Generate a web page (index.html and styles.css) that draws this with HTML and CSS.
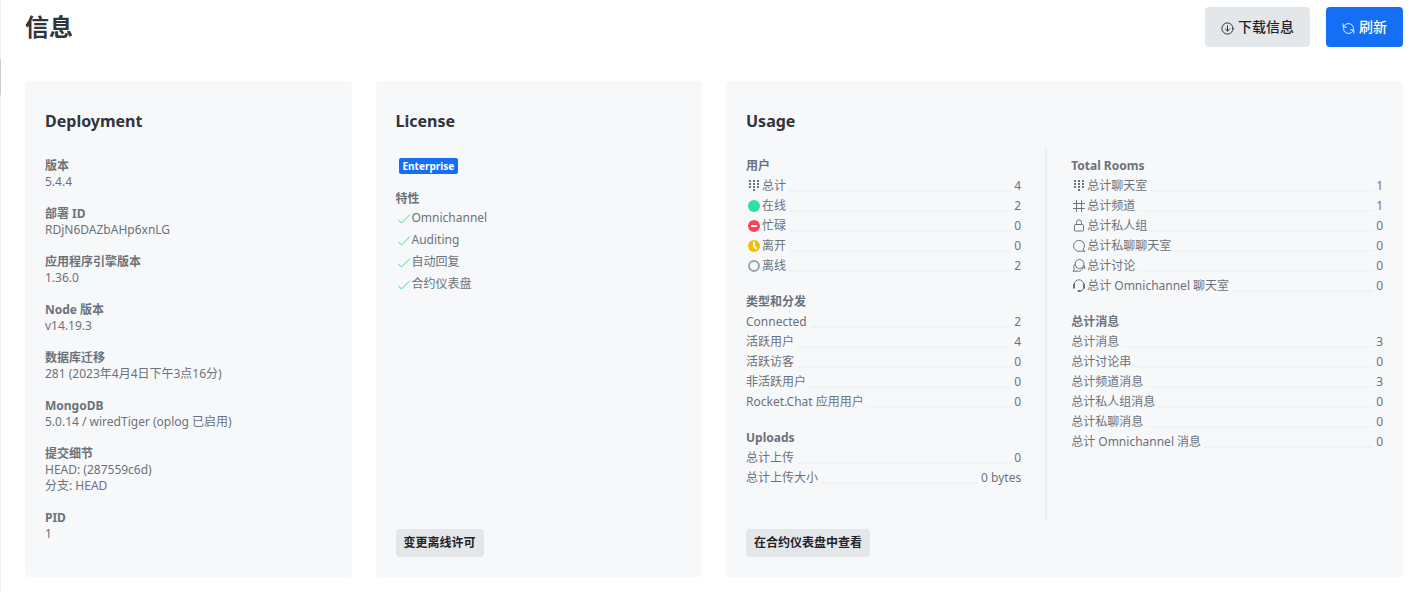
FILE: index.html
```html
<!DOCTYPE html>
<html lang="zh-CN">
<head>
    <meta charset="UTF-8">
    <meta name="viewport" content="width=device-width, initial-scale=1.0">
    <title>信息</title>
    <link rel="stylesheet" href="styles.css">
</head>
<body>
    <!-- Icon set -->
    <svg class="icon-defs" aria-hidden="true">
        <symbol id="i-download" viewBox="0 0 14 14">
            <circle cx="7" cy="7" r="6"/>
            <path d="M7 4v5.600M4.600 7.400L7 9.800l2.400-2.400"/>
        </symbol>
        <symbol id="i-refresh" viewBox="0 0 14 14">
            <path d="M1.200 2v3.600h3.600M1.600 5.300C2.600 3 4.600 1.700 7 1.700c2.900 0 5.200 2.100 5.400 5M12.800 12V8.400H9.200M12.400 8.700c-1 2.300-3 3.600-5.400 3.600-2.900 0-5.200-2.100-5.400-5"/>
        </symbol>
        <symbol id="i-check" viewBox="0 0 16 16">
            <path d="M2.500 10l3 3 8-8"/>
        </symbol>
        <symbol id="i-dialpad" viewBox="0 0 16 16">
            <path d="M3 2h2v2H3zM7 2h2v2H7zM11 2h2v2h-2zM3 5h2v2H3zM7 5h2v2H7zM11 5h2v2h-2zM3 8h2v2H3zM7 8h2v2H7zM11 8h2v2h-2zM7 11h2v2H7z"/>
        </symbol>
        <symbol id="i-hash" viewBox="0 0 16 16">
            <path d="M5.500 2.500v11M10.500 2.500v11M2.500 5.500h11M2.500 10.500h11"/>
        </symbol>
        <symbol id="i-lock" viewBox="0 0 16 16">
            <rect x="3.500" y="6.500" width="9" height="6.500" rx="1"/>
            <path d="M5.500 6.500V4.300a2.500 2.500 0 0 1 5 0V6.500"/>
        </symbol>
        <symbol id="i-balloon" viewBox="0 0 16 16">
            <path d="M12.200 11.500a5.500 5.500 0 1 0-2.700 1.700h4z"/>
        </symbol>
        <symbol id="i-discussion" viewBox="0 0 16 16">
            <path d="M5.400 9.200a4.500 4.500 0 1 1 3.200 1.300c-1.300 0-2.400-.5-3.200-1.300zM12 9.500l2 .8-.8-2.600M4 6C2.500 7.700 2.400 9.400 3.300 11L2 13.200h5.500c2 0 3.300-1 4-2.700"/>
        </symbol>
        <symbol id="i-headset" viewBox="0 0 16 16">
            <path d="M3.300 7V6.500a4.700 4.700 0 0 1 9.400 0V9.500c0 2-1 3.200-3.700 3.500"/>
            <path class="thick" d="M3 6.500v3.200M13 6.500v3.200M7.500 13h1.500"/>
        </symbol>
        <symbol id="i-away" viewBox="0 0 16 16">
            <circle class="away" cx="8" cy="8" r="6"/>
            <path class="hands" d="M8 4.500V8l2 2.500"/>
        </symbol>
    </svg>

    <main class="page">
        <header class="page-header">
            <h1>信息</h1>
            <div class="actions">
                <button type="button" class="btn"><svg class="icon-btn"><use href="#i-download"/></svg>下载信息</button>
                <button type="button" class="btn btn-primary"><svg class="icon-btn"><use href="#i-refresh"/></svg>刷新</button>
            </div>
        </header>

        <div class="cards">
            <section class="card">
                <h2>Deployment</h2>
                <dl class="card-body details">
                    <div><dt>版本</dt><dd>5.4.4</dd></div>
                    <div><dt>部署 ID</dt><dd>RDjN6DAZbAHp6xnLG</dd></div>
                    <div><dt>应用程序引擎版本</dt><dd>1.36.0</dd></div>
                    <div><dt>Node 版本</dt><dd>v14.19.3</dd></div>
                    <div><dt>数据库迁移</dt><dd>281 (2023年4月4日下午3点16分)</dd></div>
                    <div><dt>MongoDB</dt><dd>5.0.14 / wiredTiger (oplog 已启用)</dd></div>
                    <div><dt>提交细节</dt><dd>HEAD: (287559c6d)</dd><dd>分支: HEAD</dd></div>
                    <div><dt>PID</dt><dd>1</dd></div>
                </dl>
            </section>

            <section class="card">
                <h2>License</h2>
                <div class="card-body">
                    <span class="badge">Enterprise</span>
                    <h3>特性</h3>
                    <ul class="features">
                        <li><svg class="icon check"><use href="#i-check"/></svg>Omnichannel</li>
                        <li><svg class="icon check"><use href="#i-check"/></svg>Auditing</li>
                        <li><svg class="icon check"><use href="#i-check"/></svg>自动回复</li>
                        <li><svg class="icon check"><use href="#i-check"/></svg>合约仪表盘</li>
                    </ul>
                </div>
                <div class="card-footer">
                    <button type="button" class="btn btn-small">变更离线许可</button>
                </div>
            </section>

            <section class="card card-wide">
                <h2>Usage</h2>
                <div class="usage">
                    <div class="usage-col">
                        <div class="group">
                            <h3>用户</h3>
                            <dl>
                                <div class="row"><dt><svg class="icon solid"><use href="#i-dialpad"/></svg>总计</dt><dd>4</dd></div>
                                <div class="row"><dt><span class="status online"></span>在线</dt><dd>2</dd></div>
                                <div class="row"><dt><span class="status busy"></span>忙碌</dt><dd>0</dd></div>
                                <div class="row"><dt><svg class="icon"><use href="#i-away"/></svg>离开</dt><dd>0</dd></div>
                                <div class="row"><dt><span class="status offline"></span>离线</dt><dd>2</dd></div>
                            </dl>
                        </div>
                        <div class="group">
                            <h3>类型和分发</h3>
                            <dl>
                                <div class="row"><dt>Connected</dt><dd>2</dd></div>
                                <div class="row"><dt>活跃用户</dt><dd>4</dd></div>
                                <div class="row"><dt>活跃访客</dt><dd>0</dd></div>
                                <div class="row"><dt>非活跃用户</dt><dd>0</dd></div>
                                <div class="row"><dt>Rocket.Chat 应用用户</dt><dd>0</dd></div>
                            </dl>
                        </div>
                        <div class="group">
                            <h3>Uploads</h3>
                            <dl>
                                <div class="row"><dt>总计上传</dt><dd>0</dd></div>
                                <div class="row"><dt>总计上传大小</dt><dd>0 bytes</dd></div>
                            </dl>
                        </div>
                    </div>
                    <div class="divider"></div>
                    <div class="usage-col">
                        <div class="group">
                            <h3>Total Rooms</h3>
                            <dl>
                                <div class="row"><dt><svg class="icon solid"><use href="#i-dialpad"/></svg>总计聊天室</dt><dd>1</dd></div>
                                <div class="row"><dt><svg class="icon"><use href="#i-hash"/></svg>总计频道</dt><dd>1</dd></div>
                                <div class="row"><dt><svg class="icon"><use href="#i-lock"/></svg>总计私人组</dt><dd>0</dd></div>
                                <div class="row"><dt><svg class="icon"><use href="#i-balloon"/></svg>总计私聊聊天室</dt><dd>0</dd></div>
                                <div class="row"><dt><svg class="icon"><use href="#i-discussion"/></svg>总计讨论</dt><dd>0</dd></div>
                                <div class="row"><dt><svg class="icon"><use href="#i-headset"/></svg>总计 Omnichannel 聊天室</dt><dd>0</dd></div>
                            </dl>
                        </div>
                        <div class="group">
                            <h3>总计消息</h3>
                            <dl>
                                <div class="row"><dt>总计消息</dt><dd>3</dd></div>
                                <div class="row"><dt>总计讨论串</dt><dd>0</dd></div>
                                <div class="row"><dt>总计频道消息</dt><dd>3</dd></div>
                                <div class="row"><dt>总计私人组消息</dt><dd>0</dd></div>
                                <div class="row"><dt>总计私聊消息</dt><dd>0</dd></div>
                                <div class="row"><dt>总计 Omnichannel 消息</dt><dd>0</dd></div>
                            </dl>
                        </div>
                    </div>
                </div>
                <div class="card-footer">
                    <button type="button" class="btn btn-small">在合约仪表盘中查看</button>
                </div>
            </section>
        </div>
    </main>
</body>
</html>
```
FILE: styles.css
```css
* {
    box-sizing: border-box;
}
body {
    margin: 0;
    background-color: #ffffff;
    color: #6c727a;
    font-family: "Noto Sans", "Noto Sans CJK SC", sans-serif;
    font-size: 12px;
    line-height: 16px;
}
h1, h2, h3, dl, dd, ul {
    margin: 0;
    padding: 0;
}
ul {
    list-style: none;
}

.page {
    position: relative;
    min-height: 100vh;
    padding: 7px 14px 15px 24px;
    border-left: 1px solid #eeeff1;
}
/* Edge of the sidebar scrollbar */
.page::before {
    content: "";
    position: absolute;
    left: -1px;
    top: 59px;
    width: 1px;
    height: 36px;
    background-color: #cbced1;
}
.page-header {
    display: flex;
    justify-content: space-between;
    align-items: center;
    margin-bottom: 34px;
}
h1 {
    font-size: 24px;
    line-height: 32px;
    font-weight: 700;
    color: #2f343d;
}
.actions {
    display: flex;
    gap: 16px;
}

/* Buttons */
.btn {
    display: flex;
    align-items: center;
    gap: 4px;
    height: 40px;
    padding: 0 16px;
    border: 0;
    border-radius: 4px;
    background-color: #e4e7ea;
    color: #1f2329;
    font-family: inherit;
    font-size: 14px;
    line-height: 20px;
    font-weight: 500;
    cursor: pointer;
}
.btn-primary {
    background-color: #156ff5;
    color: #ffffff;
}
.btn-small {
    height: 28px;
    padding: 0 8px;
    font-size: 12px;
    line-height: 16px;
    font-weight: 700;
}

/* Cards */
.cards {
    display: grid;
    grid-template-columns: repeat(4, minmax(0, 1fr));
    gap: 24px;
}
.card {
    display: flex;
    flex-direction: column;
    padding: 28px 20px 20px;
    border-radius: 4px;
    background-color: #f7f8fa;
}
.card-wide {
    grid-column: span 2;
}
h2 {
    font-size: 16px;
    line-height: 24px;
    font-weight: 700;
    color: #2f343d;
}
h3, .details dt {
    font-size: 12px;
    line-height: 16px;
    font-weight: 700;
}
.card-body {
    padding: 25px 0 15px;
}
.card-footer {
    margin-top: auto;
    padding-top: 8px;
}
.details {
    display: flex;
    flex-direction: column;
    gap: 16px;
}
.badge {
    display: block;
    width: fit-content;
    margin: 0 3px 17px;
    padding: 0 4px;
    border-radius: 2px;
    background-color: #156ff5;
    color: #ffffff;
    font-size: 10px;
    font-weight: 700;
}
.features li {
    display: flex;
    align-items: center;
    line-height: 22px;
}

/* Usage */
.usage {
    flex: 1;
    display: grid;
    grid-template-columns: 15fr 2px 17fr;
    gap: 24px;
    margin-top: 16px;
}
.usage-col {
    display: flex;
    flex-direction: column;
    gap: 20px;
    padding: 9px 0;
}
.divider {
    background-color: #eaecef;
}
.row {
    display: flex;
    margin-top: 4px;
}
.row dt {
    display: flex;
    align-items: center;
}
/* Dotted leader between the label and its value */
.row::after {
    content: "";
    flex: 1;
    order: 1;
    margin: 0 3px 2px 4px;
    border-bottom: 2px dotted #eeeff1;
}
.row dd {
    order: 2;
}

/* Icons */
.icon-defs {
    position: absolute;
    width: 0;
    height: 0;
}
.icon, .icon-btn {
    flex: none;
    width: 16px;
    height: 16px;
    fill: none;
    stroke: currentColor;
    stroke-width: 1;
    stroke-linecap: round;
    stroke-linejoin: round;
}
.icon-btn {
    width: 13px;
    height: 13px;
    margin-top: 3px;
}
.icon.solid {
    fill: currentColor;
    stroke: none;
}
.check {
    color: #2de0a5;
}
.thick {
    stroke-width: 2;
}
.away {
    fill: #f3be08;
    stroke: none;
}
.hands {
    stroke: #ffffff;
    stroke-width: 2;
}
.status {
    position: relative;
    width: 12px;
    height: 12px;
    margin: 0 2px;
    border-radius: 50%;
}
.online {
    background-color: #2de0a5;
}
.busy {
    background-color: #f5455c;
}
.busy::after {
    content: "";
    position: absolute;
    left: 3px;
    top: 5px;
    width: 6px;
    height: 2px;
    background-color: #ffffff;
}
.offline {
    border: 2px solid #9ea2a8;
}
```
